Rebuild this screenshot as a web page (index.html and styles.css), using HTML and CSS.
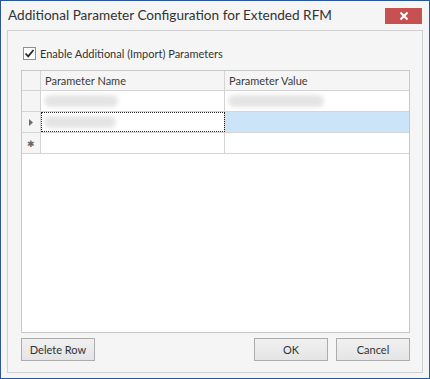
FILE: index.html
```html
<!DOCTYPE html>
<html>
<head>
<meta charset="utf-8">
<link rel="stylesheet" href="styles.css">
</head>
<body>
<div class="window">
  <div class="titlebar">
    <span class="title">Additional Parameter Configuration for Extended RFM</span>
    <button class="close" aria-label="Close">
      <svg width="10" height="10" viewBox="0 0 10 10"><path d="M1.5 1.5 L8.5 8.5 M8.5 1.5 L1.5 8.5" stroke="#fff" stroke-width="2.2" fill="none"/></svg>
    </button>
  </div>
  <div class="group">
    <label class="check">
      <span class="box">
        <svg width="11" height="11" viewBox="0 0 11 11"><path d="M1.5 5.5 L4.2 8.3 L9.5 2" stroke="#2a2a2a" stroke-width="1.8" fill="none"/></svg>
      </span>
      <span class="check-label">Enable Additional (Import) Parameters</span>
    </label>
    <div class="grid">
      <div class="row header">
        <div class="ind"></div>
        <div class="cell name">Parameter Name</div>
        <div class="cell value">Parameter Value</div>
      </div>
      <div class="row">
        <div class="ind"></div>
        <div class="cell name"><span class="blur w74"></span></div>
        <div class="cell value"><span class="blur w96"></span></div>
      </div>
      <div class="row selected">
        <div class="ind"><svg width="4" height="7" viewBox="0 0 4 7"><path d="M0 0 L4 3.5 L0 7 Z" fill="#6d6d6d"/></svg></div>
        <div class="cell name focus"><span class="blur w72"></span></div>
        <div class="cell value sel"></div>
      </div>
      <div class="row">
        <div class="ind"><span class="star">✱</span></div>
        <div class="cell name"></div>
        <div class="cell value"></div>
      </div>
    </div>
    <div class="buttons">
      <button class="btn">Delete Row</button>
      <span class="spacer"></span>
      <button class="btn">OK</button>
      <button class="btn">Cancel</button>
    </div>
  </div>
</div>
</body>
</html>
```
FILE: styles.css
```css
* { box-sizing: border-box; }
html, body { margin: 0; padding: 0; }
body { font-family: Lato, "Noto Sans", sans-serif; color: #1e1e1e; }
.window {
  width: 430px; height: 379px;
  border: 1px solid #2b579a;
  background: #f5f5f5;
  display: flex; flex-direction: column;
}
.titlebar {
  height: 29px;
  display: flex; align-items: flex-start;
  padding-left: 7px;
}
.title {
  font-size: 13.6px; color: #333;
  margin-top: 6px;
  white-space: nowrap;
  flex: 1;
}
.close {
  width: 37px; height: 16px;
  margin-top: 7px; margin-right: 7px;
  background: #c75050; border: 0; padding: 0;
  display: flex; align-items: center; justify-content: center;
}
.group {
  margin: 0 6px 5px 6px;
  flex: 1;
  border: 1px solid #cfcfcf;
  display: flex; flex-direction: column;
  padding: 16px 12px 11px 13px;
}
.check {
  display: flex; align-items: center; height: 13px;
  margin-left: 2px;
  font-size: 11px; color: #333;
}
.box {
  width: 13px; height: 13px;
  border: 1px solid #8f8f8f; background: #fff;
  display: flex; align-items: center; justify-content: center;
  margin-right: 4px;
}
.grid {
  margin-top: 10px;
  height: 263px;
  border: 1px solid #c8c8c8;
  background: #fff;
  font-size: 11px; color: #333;
}
.row { display: flex; height: 21px; border-bottom: 1px solid #d4d4d4; }
.row.header { height: 20px; background: #f5f5f5; }
.ind {
  width: 19px; flex: none;
  border-right: 1px solid #d4d4d4;
  background: #f5f5f5;
  display: flex; align-items: center; justify-content: center;
}
.cell {
  display: flex; align-items: center;
  padding-left: 4px; overflow: hidden; white-space: nowrap;
}
.row:not(.header) .cell { padding-left: 3px; }
.cell.name { width: 184px; flex: none; border-right: 1px solid #d4d4d4; }
.cell.value { flex: 1; }
.header .cell { color: #3b3b3b; }
.cell.focus { outline: 1px dotted #222; outline-offset: -1px; }
.cell.sel { background: #cce4f7; }
.blur {
  display: block; background: #e4e4e4; border-radius: 6px;
  filter: blur(2px); height: 12px;
}
.w74 { width: 74px; }
.w96 { width: 96px; }
.w72 { width: 72px; }
.star { font-size: 9px; color: #666; }
.buttons { margin-top: 5px; display: flex; height: 23px; gap: 8px; }
.spacer { flex: 1; }
.btn {
  width: 74px; height: 23px;
  font-family: inherit; font-size: 11px; color: #333;
  background: linear-gradient(#f0f0f0, #e5e5e5);
  border: 1px solid #acacac;
  padding: 0;
}
```
